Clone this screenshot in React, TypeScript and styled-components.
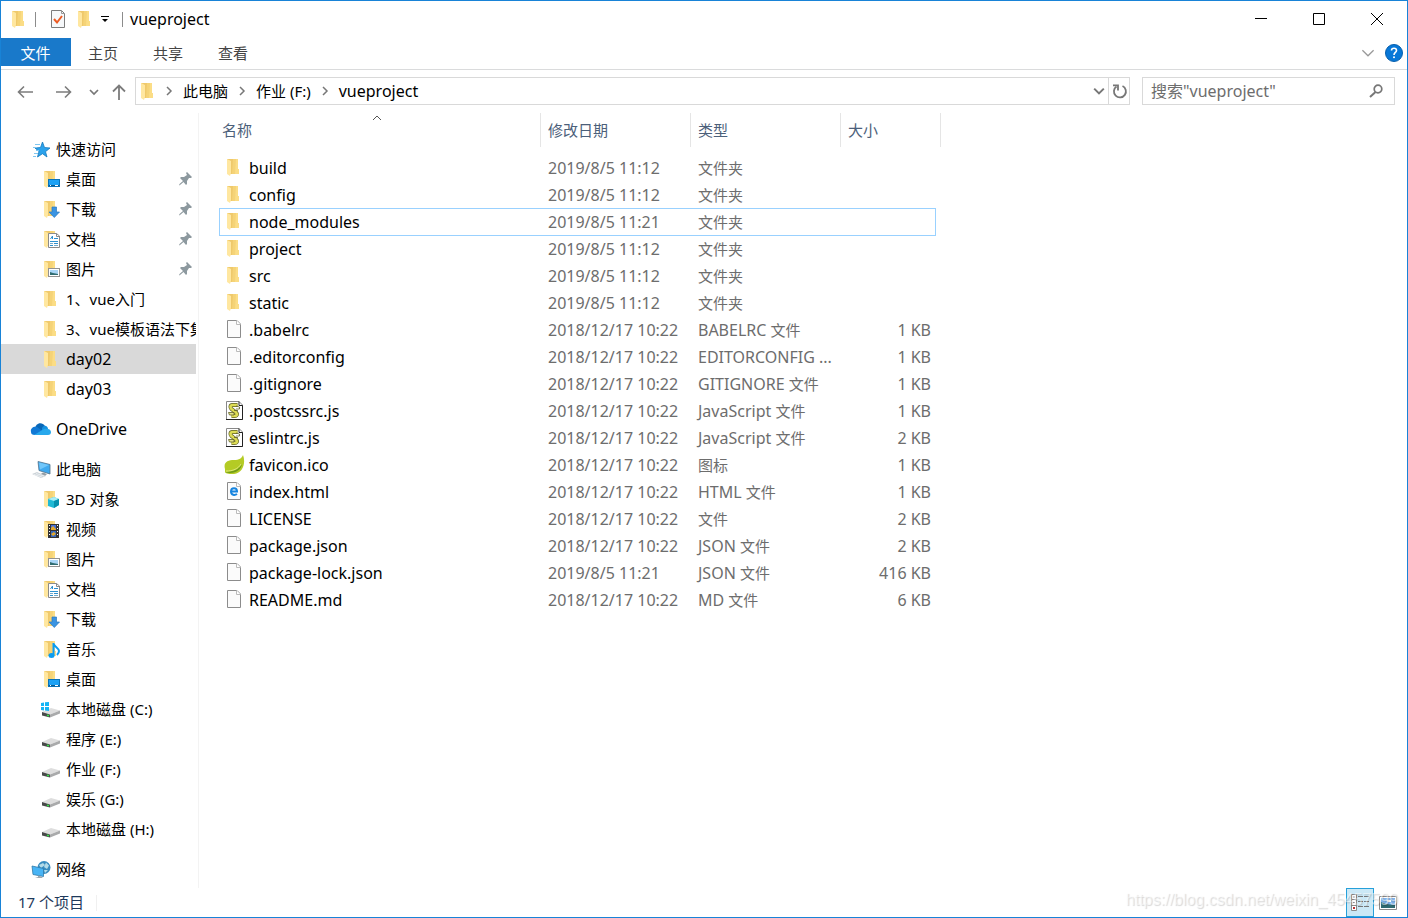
import React from "react";
import styled, { createGlobalStyle, css } from "styled-components";

const GlobalStyle = createGlobalStyle`
  * { box-sizing: border-box; }
  body { margin: 0; background: #fff; }
  button, input { font: inherit; color: inherit; }
  svg { display: block; flex: none; }
`;

const Window = styled.div`
  position: relative;
  display: flex;
  flex-direction: column;
  min-height: 100vh;
  border: 1px solid #1883d7;
  background: #fff;
  color: #000;
  font-family: "Noto Sans", "Noto Sans CJK SC", sans-serif;
  font-size: 15px;
  line-height: 20px;
`;

const TitleBar = styled.header`
  display: flex;
  align-items: center;
  height: 37px;
  padding: 0 1px 1px 10px;
`;

const Divider = styled.span<{ $before: number; $after: number }>`
  width: 1px;
  height: 15px;
  margin: 0 ${(p) => p.$after}px 0 ${(p) => p.$before}px;
  background: #8c8c8c;
`;

const PlainButton = styled.button`
  display: flex;
  align-items: center;
  justify-content: center;
  padding: 0;
  border: 0;
  background: transparent;
`;

const QuickTools = styled.div`
  display: flex;
  align-items: center;
  gap: 11px;
`;

const Title = styled.h1`
  flex: 1;
  margin: 0;
  font-size: 16px;
  font-weight: 400;
`;

const CaptionButton = styled(PlainButton)`
  width: 58px;
  height: 36px;
`;

const Ribbon = styled.nav`
  display: flex;
  align-items: flex-start;
  height: 32px;
  border-bottom: 1px solid #dadbdc;
`;

const Tab = styled.button<{ $primary?: boolean }>`
  width: ${(p) => (p.$primary ? 70 : 65)}px;
  height: 28px;
  padding: 1px 1px 0 0;
  border: 0;
  background: ${(p) => (p.$primary ? "#1979ca" : "transparent")};
  color: ${(p) => (p.$primary ? "#fff" : "#444")};
`;

const RibbonTools = styled.div`
  display: flex;
  align-items: center;
  gap: 10px;
  height: 30px;
  margin-left: auto;
  padding-right: 4px;
`;

const NavBar = styled.div`
  display: flex;
  align-items: center;
  padding: 7px 12px 8px 16px;
`;

const Arrows = styled.div`
  display: flex;
  align-items: center;
  width: 118px;
  padding-top: 2px;
`;

const ArrowButton = styled(PlainButton)<{ $gap?: number }>`
  margin-right: ${(p) => p.$gap ?? 0}px;
`;

const AddressBar = styled.div`
  display: flex;
  flex: 1;
  align-items: center;
  height: 28px;
  padding: 0 0 1px 4px;
  border: 1px solid #d9d9d9;
`;

const Crumbs = styled.div`
  display: flex;
  flex: 1;
  align-items: center;
  gap: 9px;
  padding-left: 11px;
`;

const Crumb = styled.a<{ $latin?: boolean }>`
  color: #000;
  font-size: ${(p) => (p.$latin ? 16 : 15)}px;
  text-decoration: none;
`;

const RefreshButton = styled(PlainButton)`
  width: 21px;
  height: 26px;
  padding-left: 2px;
  border-left: 1px solid #d9d9d9;
`;

const SearchBox = styled.label`
  display: flex;
  align-items: center;
  width: 253px;
  height: 28px;
  margin-left: 12px;
  padding: 0 11px 0 8px;
  border: 1px solid #d9d9d9;
`;

const SearchInput = styled.input`
  flex: 1;
  min-width: 0;
  padding: 0;
  border: 0;
  outline: 0;
  background: transparent;
  font-size: 16px;
  &::placeholder { color: #6d6d6d; opacity: 1; }
`;

const Body = styled.div`
  display: flex;
  flex: 1;
`;

const Sidebar = styled.aside`
  width: 198px;
  padding: 21px 2px 4px 0;
  border-right: 1px solid #f3f3f3;
`;

const Group = styled.ul`
  margin: 0 0 10px;
  padding: 0;
  list-style: none;
  &:last-child { margin-bottom: 0; }
`;

const TreeItem = styled.a<{ $root?: boolean; $selected?: boolean; $latin?: boolean }>`
  display: flex;
  align-items: center;
  height: 30px;
  padding: 0 4px 0 ${(p) => (p.$root ? 29 : 39)}px;
  background: ${(p) => (p.$selected ? "#d9d9d9" : "transparent")};
  color: #000;
  font-size: ${(p) => (p.$latin ? 16 : 15)}px;
  text-decoration: none;
  overflow: hidden;
`;

const TreeIcon = styled.span`
  display: flex;
  flex: none;
  width: 26px;
  padding-top: 1px;
`;

const TreeLabel = styled.span`
  flex: 1;
  margin-right: -4px;
  white-space: nowrap;
  overflow: hidden;
`;

const Content = styled.main`
  flex: 1;
  padding: 0 0 0 20px;
`;

const FileTable = styled.table`
  display: block;
  width: 722px;
`;

const Head = styled.thead`
  display: block;
  padding-bottom: 7px;
`;

const Rows = styled.tbody`
  display: block;
`;

const columns = css`
  display: grid;
  grid-template-columns: 322px 150px 150px 1fr;
`;

const HeadRow = styled.tr`
  ${columns}
`;

const HeadCell = styled.th<{ $first?: boolean }>`
  position: relative;
  height: 34px;
  padding: 7px 0 0 ${(p) => (p.$first ? 3 : 7)}px;
  border-right: 1px solid #e5e5e5;
  color: #4c607a;
  font-weight: 400;
  text-align: left;
`;

const SortMark = styled.span`
  position: absolute;
  top: 0;
  left: 153px;
`;

const FileRow = styled.tr<{ $focused?: boolean }>`
  ${columns}
  width: 717px;
  height: 27px;
  box-shadow: ${(p) =>
    p.$focused
      ? "inset 1px 0 0 #99d1ff, inset -1px 0 0 #99d1ff, inset 0 1px 0 #99d1ff, 0 1px 0 #99d1ff"
      : "none"};
`;

const FileCell = styled.td<{ $right?: boolean }>`
  padding: 4px ${(p) => (p.$right ? 5 : 0)}px 0 7px;
  color: #6d6d6d;
  font-size: 16px;
  text-align: ${(p) => (p.$right ? "right" : "left")};
  white-space: nowrap;
`;

const Han = styled.span`
  font-size: 15px;
`;

const NameCell = styled(FileCell)`
  display: flex;
  align-items: center;
  padding: 1px 0 0 5px;
  color: #000;
`;

const FileIcon = styled.span`
  display: flex;
  width: 25px;
`;

const StatusBar = styled.footer`
  display: flex;
  align-items: center;
  justify-content: space-between;
  height: 29px;
  padding-left: 17px;
  color: #1e395b;
`;

const Count = styled.span`
  padding: 0 12px 2px 0;
  border-right: 1px solid #f0f0f0;
  line-height: 14px;
`;

const ViewButtons = styled.div`
  display: flex;
  padding-right: 5px;
`;

const ViewButton = styled(PlainButton)<{ $active?: boolean }>`
  width: 28px;
  height: 29px;
  border: 1px solid ${(p) => (p.$active ? "#26a0da" : "transparent")};
  background: ${(p) => (p.$active ? "#cbe8f6" : "transparent")};
`;

const Watermark = styled.div`
  position: absolute;
  right: 9px;
  bottom: 7px;
  color: rgba(255, 255, 255, 0.5);
  font-family: "Liberation Sans", Arial, sans-serif;
  font-size: 16px;
  text-shadow: 1px 1px 1px rgba(0, 0, 0, 0.16);
  pointer-events: none;
`;

const FolderShape = () => (
  <>
    <path d="M1 1H12V11H13V16H4Z" fill="#efc96b" />
    <path d="M7 1H12V11H13V16H6Z" fill="#f5d377" />
    <path d="M10 1H12V11H13V16H9Z" fill="#fbdd86" />
    <path d="M1 1L5 3V15L4 18L1 16Z" fill="#ffe7a0" />
  </>
);

const Folder = () => (
  <svg width="13" height="18" viewBox="0 0 13 18"><FolderShape /></svg>
);

type Kind =
  | "star" | "desktop" | "download" | "document" | "picture" | "folder" | "cloud"
  | "pc" | "cube" | "video" | "music" | "system" | "drive" | "network";

const overlays: Partial<Record<Kind, React.ReactNode>> = {
  desktop: (
    <>
      <rect x="8.500" y="9.500" width="11" height="7" fill="#1ba1f5" stroke="#0b73b8" />
      <path d="M9 15.500H19" stroke="#075b91" />
      <path d="M10 15.500H11M15 15.500H18" stroke="#fff" />
    </>
  ),
  download: <path d="M12 7H16.500V12H19.500L14.300 17.500L9 12H12Z" fill="#3b94e2" stroke="#2879c0" strokeWidth=".7" />,
  document: (
    <>
      <path d="M8.500 3.500H16.500L19.500 6V17.500H8.500Z" fill="#fff" stroke="#8a8a8a" />
      <path d="M16.500 3.500V6.500H19.500" fill="none" stroke="#8a8a8a" />
      <path d="M10.500 9L12.500 6V9M14 8.500H18M10 11.500H18M14 13.500H18M10 15.500H13" stroke="#2c90cf" fill="none" />
      <path d="M10 13.500H13M14 15.500H18" stroke="#79aac8" />
    </>
  ),
  picture: (
    <>
      <rect x="8.500" y="8.500" width="11" height="8" fill="#fff" stroke="#929292" />
      <path d="M10 10H18V15H10Z" fill="#a9d5f6" />
      <path d="M10 12L13 13L18 14V15H10Z" fill="#316d72" />
    </>
  ),
  cube: (
    <>
      <path d="M8 9L14 7L19 9V15L14 18L8 16Z" fill="#20b9d4" />
      <path d="M8 9L14 7L19 9L14 11Z" fill="#a9edf5" />
      <path d="M14 11L19 9V15L14 18Z" fill="#0791ae" />
    </>
  ),
  video: (
    <>
      <path d="M8 4H19V18H8Z" fill="#333" />
      <path d="M11 5H16V10H11Z" fill="#4971d4" />
      <path d="M11 11H16V17H11Z" fill="#3768bd" />
      <path d="M11 8L13 6L16 9V10H11ZM11 14L14 12L16 14L13 16Z" fill="#e4a82b" />
      <path d="M9.500 5V17M17.500 5V17" stroke="#fff" strokeDasharray="1 2" />
    </>
  ),
  music: (
    <>
      <ellipse cx="11.500" cy="15.500" rx="3" ry="2.500" fill="#0a9cf1" />
      <path d="M13.500 15.500V3C14 7 19 8 19 11C19 13 18 14 17 15" fill="none" stroke="#0a9cf1" strokeWidth="2" />
    </>
  ),
};

const DriveShape = () => (
  <>
    <path d="M2 12L11 8L20 10.500L10 14.500Z" fill="#dedede" />
    <path d="M10 14.500L20 10.500V13.500L10 17.500Z" fill="#a9aaab" />
    <path d="M2 12L10 14.500V17.500L2 15.500Z" fill="#48494a" />
    <path d="M7 15.200L9 15.800" stroke="#38df4a" strokeWidth="1.500" />
  </>
);

const TreeGlyph = ({ kind }: { kind: Kind }) => {
  const box = { width: 21, height: 20, viewBox: "0 0 21 20" };
  switch (kind) {
    case "star":
      return (
        <svg {...box}>
          <path d="M12.500 2L14.500 7.500L20 8L15.500 11.700L17 17L12.500 13.700L7.500 17L9 11.500L5 8L10.500 7.500Z" fill="#2ba2ec" stroke="#1478bd" strokeWidth=".8" />
          <path d="M5 4.500H10M3 7.500H7M6 10.500H9M4 13.500H8M3 16.500H6" stroke="#80c6ef" />
        </svg>
      );
    case "cloud":
      return (
        <svg {...box}>
          <path d="M5 9C5 3 12 1 15 6L11 12Z" fill="#0867b7" />
          <path d="M1 12C0 8 4 6 7 7L14 12L5 15C2 15 1 14 1 12Z" fill="#1179d5" />
          <path d="M12 8C14 4 18 6 18 9L12 12Z" fill="#1490df" />
          <path d="M4 15L14 9C17 8 21 9 21 12C21 14 20 15 18 15Z" fill="#28a8ec" />
        </svg>
      );
    case "pc":
      return (
        <svg {...box}>
          <path d="M8 1.500L20 4.500V14L9 10.500Z" fill="#3fa9ef" stroke="#50718b" strokeWidth=".8" />
          <path d="M9 2.500L19 5L10 9.500Z" fill="#70c6fa" />
          <path d="M13 12.500L17 14L15 16L10 14.500Z" fill="#929da5" />
          <path d="M2 14L7 12L16 16L11 18Z" fill="#ccd3d8" />
          <path d="M4 14.500L12 17M6 13.500L14 16" stroke="#f7f9fa" strokeWidth=".7" />
        </svg>
      );
    case "network":
      return (
        <svg {...box}>
          <circle cx="14" cy="7.500" r="6.500" fill="#388cc0" />
          <path d="M9 5L13 3L15 5L11 8ZM16 2.500L19 5.500L17 9L14 7ZM14 10L18 10L15 13Z" fill="#b3dbe8" />
          <path d="M2 6L13.500 8.500V16.500L3 14.500Z" fill="#48b4f5" stroke="#307baa" strokeWidth=".8" />
          <path d="M8 15.500V17L5 18H13L11 16.500" fill="#9ca8b0" />
        </svg>
      );
    case "drive":
      return <svg {...box}><DriveShape /></svg>;
    case "system":
      return (
        <svg {...box}>
          <DriveShape />
          <path d="M1 3L4 2.500V6H1ZM5 2.300L9 2V6H5ZM1 7H4V10.500L1 10ZM5 7H9V11L5 10.500Z" fill="#14b4f5" />
        </svg>
      );
    default:
      return (
        <svg {...box}>
          <g transform="translate(3 0)"><FolderShape /></g>
          {overlays[kind]}
        </svg>
      );
  }
};

const Pin = () => (
  <svg width="13" height="14" viewBox="0 0 13 14">
    <path d="M8 0L13 5L12 6H10L8 9V12L7 13L4.500 10L1 13L0 13.500L.500 12L4 9L1 6L2 5H5L8 3L7 1Z" fill="#8d999f" />
  </svg>
);

const PageOutline = () => (
  <>
    <path d="M1.500 .500H11L14.500 4V17.500H1.500Z" fill="#fbfbfb" stroke="#8c8c8c" />
    <path d="M10.500 .500V4.500H14.500" fill="#fff" stroke="#bbb" />
  </>
);

type FileKind = "folder" | "file" | "js" | "leaf" | "html";

const FileGlyph = ({ kind }: { kind: FileKind }) => {
  const box = { width: 21, height: 20, viewBox: "0 0 21 20" };
  if (kind === "folder")
    return <svg {...box}><g transform="translate(2 0)"><FolderShape /></g></svg>;
  if (kind === "leaf")
    return (
      <svg {...box}>
        <path d="M1 14C-1 7 4 5 10 5C15 5 18 3 19 0C22 8 19 18 10 19C6 19 2 19 1 17Z" fill="#b4cb25" />
        <path d="M1 17C8 17 15 15 18 9C17 16 9 20 1 17Z" fill="#6f9b18" />
        <path d="M2 16C9 16 14 14 17 9" fill="none" stroke="#dce77c" />
      </svg>
    );
  if (kind === "js")
    return (
      <svg {...box}>
        <path d="M2.500 .500H15L18.500 4V18.500H2.500Z" fill="#fff" stroke="#888" />
        <path d="M15 .500V4.500H18.500V18.500H2" fill="none" stroke="#222" />
        <path d="M13.500 4H8.500C6 4 6 6.500 7.500 8L12 11.500C14 13.500 12.500 15 10.500 15H7.500" fill="none" stroke="#5f6024" strokeWidth="4" />
        <path d="M13.500 4H8.500C6 4 6 6.500 7.500 8L12 11.500C14 13.500 12.500 15 10.500 15H7.500" fill="none" stroke="#dddc55" strokeWidth="2.600" />
        <path d="M4.500 11.500H10V14H5.500Z" fill="#e6e68b" stroke="#5f6024" strokeWidth=".8" />
        <path d="M12 5L15.500 6V8H12M10 9.500H14" fill="none" stroke="#5f6024" strokeWidth=".8" />
      </svg>
    );
  return (
    <svg {...box}>
      <g transform="translate(2 0)">
        <PageOutline />
        {kind === "html" && (
          <path d="M5 9.500H11C11 5 5 5 5 9.500C5 13.500 9 13.500 11 12" fill="none" stroke="#1684df" strokeWidth="2" />
        )}
      </g>
    </svg>
  );
};

const Chevron = ({ dir, size = 10, color = "#777", weight = 1.5 }: {
  dir: "right" | "down" | "up"; size?: number; color?: string; weight?: number;
}) => {
  const d = { right: "M3 1L7 5L3 9", down: "M1 3L5 7L9 3", up: "M1 7L5 3L9 7" }[dir];
  return (
    <svg width={size} height={size} viewBox="0 0 10 10">
      <path d={d} fill="none" stroke={color} strokeWidth={weight} />
    </svg>
  );
};

interface Node { kind: Kind; label: string; pinned?: boolean; selected?: boolean; root?: boolean; }

const tree: Node[][] = [
  [
    { kind: "star", label: "快速访问", root: true },
    { kind: "desktop", label: "桌面", pinned: true },
    { kind: "download", label: "下载", pinned: true },
    { kind: "document", label: "文档", pinned: true },
    { kind: "picture", label: "图片", pinned: true },
    { kind: "folder", label: "1、vue入门" },
    { kind: "folder", label: "3、vue模板语法下集" },
    { kind: "folder", label: "day02", selected: true },
    { kind: "folder", label: "day03" },
  ],
  [{ kind: "cloud", label: "OneDrive", root: true }],
  [
    { kind: "pc", label: "此电脑", root: true },
    { kind: "cube", label: "3D 对象" },
    { kind: "video", label: "视频" },
    { kind: "picture", label: "图片" },
    { kind: "document", label: "文档" },
    { kind: "download", label: "下载" },
    { kind: "music", label: "音乐" },
    { kind: "desktop", label: "桌面" },
    { kind: "system", label: "本地磁盘 (C:)" },
    { kind: "drive", label: "程序 (E:)" },
    { kind: "drive", label: "作业 (F:)" },
    { kind: "drive", label: "娱乐 (G:)" },
    { kind: "drive", label: "本地磁盘 (H:)" },
  ],
  [{ kind: "network", label: "网络", root: true }],
];

const early = "2018/12/17 10:22";
const files: [FileKind, string, string, string, string][] = [
  ["folder", "build", "2019/8/5 11:12", "文件夹", ""],
  ["folder", "config", "2019/8/5 11:12", "文件夹", ""],
  ["folder", "node_modules", "2019/8/5 11:21", "文件夹", ""],
  ["folder", "project", "2019/8/5 11:12", "文件夹", ""],
  ["folder", "src", "2019/8/5 11:12", "文件夹", ""],
  ["folder", "static", "2019/8/5 11:12", "文件夹", ""],
  ["file", ".babelrc", early, "BABELRC 文件", "1 KB"],
  ["file", ".editorconfig", early, "EDITORCONFIG ...", "1 KB"],
  ["file", ".gitignore", early, "GITIGNORE 文件", "1 KB"],
  ["js", ".postcssrc.js", early, "JavaScript 文件", "1 KB"],
  ["js", "eslintrc.js", early, "JavaScript 文件", "2 KB"],
  ["leaf", "favicon.ico", early, "图标", "1 KB"],
  ["html", "index.html", early, "HTML 文件", "1 KB"],
  ["file", "LICENSE", early, "文件", "2 KB"],
  ["file", "package.json", early, "JSON 文件", "2 KB"],
  ["file", "package-lock.json", "2019/8/5 11:21", "JSON 文件", "416 KB"],
  ["file", "README.md", early, "MD 文件", "6 KB"],
];

const isLatin = (text: string) => /^[\x00-\x7f]*$/.test(text);

/* Chinese runs are set one step smaller than the Latin letters beside them. */
const MixedText = ({ text }: { text: string }) => (
  <>
    {text.split(/([\u4e00-\u9fff]+)/).filter(Boolean).map((run, i) =>
      /[\u4e00-\u9fff]/.test(run) ? <Han key={i}>{run}</Han> : run
    )}
  </>
);

export default function App() {
  return (
    <Window>
      <GlobalStyle />
      <TitleBar>
        <Folder />
        <Divider $before={11} $after={14} />
        <QuickTools>
          <PlainButton aria-label="属性">
            <svg width="16" height="18" viewBox="0 0 16 18">
              <path d="M1.500 .500H11.500L14.500 3.500V17.500H1.500Z" fill="#f6f8fa" stroke="#7c7c7c" />
              <path d="M11.500 .500V3.500H14.500" fill="none" stroke="#999" />
              <path d="M4 9L7 12.500L12 6" fill="none" stroke="#ec5b24" strokeWidth="2" />
            </svg>
          </PlainButton>
          <PlainButton aria-label="新建文件夹"><Folder /></PlainButton>
          <PlainButton aria-label="自定义快速访问工具栏">
            <svg width="8" height="8" viewBox="0 0 8 8">
              <path d="M0 1.500H8" stroke="#000" /><path d="M1 4H7L4 7Z" fill="#000" />
            </svg>
          </PlainButton>
        </QuickTools>
        <Divider $before={13} $after={7} />
        <Title>vueproject</Title>
        <CaptionButton aria-label="最小化">
          <svg width="12" height="12"><path d="M0 5.500H12" stroke="#000" /></svg>
        </CaptionButton>
        <CaptionButton aria-label="最大化">
          <svg width="12" height="12"><path d="M.500 .500H11.500V11.500H.500Z" fill="none" stroke="#000" /></svg>
        </CaptionButton>
        <CaptionButton aria-label="关闭">
          <svg width="12" height="12"><path d="M0 0L12 12M12 0L0 12" stroke="#000" /></svg>
        </CaptionButton>
      </TitleBar>

      <Ribbon>
        <Tab $primary>文件</Tab>
        <Tab>主页</Tab>
        <Tab>共享</Tab>
        <Tab>查看</Tab>
        <RibbonTools>
          <PlainButton aria-label="展开功能区"><Chevron dir="down" size={14} color="#999" weight={0.9} /></PlainButton>
          <PlainButton aria-label="帮助">
            <svg width="18" height="18" viewBox="0 0 18 18">
              <circle cx="9" cy="9" r="8.500" fill="#0877d7" stroke="#075fac" />
              <path d="M6.500 6.500C6.500 3.500 11.500 3.500 11.500 6.500C11.500 8.500 9 8.500 9 11" fill="none" stroke="#fff" strokeWidth="1.600" />
              <circle cx="9" cy="13.300" r="1" fill="#fff" />
            </svg>
          </PlainButton>
        </RibbonTools>
      </Ribbon>

      <NavBar>
        <Arrows>
          <ArrowButton $gap={23} aria-label="后退">
            <svg width="16" height="14"><path d="M16 7H1M7 1.500L1.500 7L7 12.500" fill="none" stroke="#7c7c7c" strokeWidth="1.600" /></svg>
          </ArrowButton>
          <ArrowButton $gap={17} aria-label="前进">
            <svg width="16" height="14"><path d="M0 7H15M9 1.500L14.500 7L9 12.500" fill="none" stroke="#7c7c7c" strokeWidth="1.600" /></svg>
          </ArrowButton>
          <ArrowButton $gap={13} aria-label="最近浏览的位置"><Chevron dir="down" weight={1.7} /></ArrowButton>
          <ArrowButton aria-label="上移">
            <svg width="14" height="16"><path d="M7 16V1.500M1 7.500L7 1.500L13 7.500" fill="none" stroke="#7c7c7c" strokeWidth="1.800" /></svg>
          </ArrowButton>
        </Arrows>
        <AddressBar>
          <Folder />
          <Crumbs>
            <Chevron dir="right" />
            <Crumb href="#pc">此电脑</Crumb>
            <Chevron dir="right" />
            <Crumb href="#f">作业 (F:)</Crumb>
            <Chevron dir="right" />
            <Crumb href="#vueproject" $latin>vueproject</Crumb>
          </Crumbs>
          <ArrowButton $gap={3} aria-label="以前的位置"><Chevron dir="down" size={12} weight={1.7} /></ArrowButton>
          <RefreshButton aria-label="刷新">
            <svg width="16" height="16" viewBox="0 0 16 16">
              <path d="M10.500 3A6 6 0 1 1 4.500 3.500" fill="none" stroke="#777" strokeWidth="1.800" />
              <path d="M1 2.300H6V7.500" fill="none" stroke="#777" strokeWidth="1.800" />
            </svg>
          </RefreshButton>
        </AddressBar>
        <SearchBox>
          <SearchInput type="text" aria-label="搜索" placeholder={'搜索"vueproject"'} />
          <svg width="14" height="14" viewBox="0 0 14 14">
            <circle cx="9" cy="5" r="3.800" fill="none" stroke="#777" strokeWidth="1.700" />
            <path d="M6.500 8L1 13" stroke="#777" strokeWidth="2" />
          </svg>
        </SearchBox>
      </NavBar>

      <Body>
        <Sidebar>
          {tree.map((group, i) => (
            <Group key={i}>
              {group.map((n) => (
                <li key={n.label}>
                  <TreeItem href="#" $root={n.root} $selected={n.selected} $latin={isLatin(n.label)}>
                    <TreeIcon><TreeGlyph kind={n.kind} /></TreeIcon>
                    <TreeLabel>{n.label}</TreeLabel>
                    {n.pinned && <Pin />}
                  </TreeItem>
                </li>
              ))}
            </Group>
          ))}
        </Sidebar>
        <Content>
          <FileTable>
            <Head>
              <HeadRow>
                <HeadCell $first>
                  名称
                  <SortMark><Chevron dir="up" color="#555" weight={1} /></SortMark>
                </HeadCell>
                <HeadCell>修改日期</HeadCell>
                <HeadCell>类型</HeadCell>
                <HeadCell>大小</HeadCell>
              </HeadRow>
            </Head>
            <Rows>
              {files.map(([kind, name, date, type, size]) => (
                <FileRow key={name} $focused={name === "node_modules"}>
                  <NameCell>
                    <FileIcon><FileGlyph kind={kind} /></FileIcon>
                    {name}
                  </NameCell>
                  <FileCell>{date}</FileCell>
                  <FileCell><MixedText text={type} /></FileCell>
                  <FileCell $right>{size}</FileCell>
                </FileRow>
              ))}
            </Rows>
          </FileTable>
        </Content>
      </Body>

      <StatusBar>
        <Count>17 个项目</Count>
        <ViewButtons>
          <ViewButton $active aria-label="详细信息">
            <svg width="18" height="17" viewBox="0 0 18 17">
              <path d="M.500 .500H5.500V16.500H.500ZM.500 5.500H5.500M.500 11.500H5.500" fill="#fff" stroke="#8a8a8a" />
              <path d="M2 3H4M2 8.500H4" stroke="#999" /><path d="M2 13H4V15H2Z" fill="#b33" />
              <path d="M7 2.500H18M7 7.500H18M7 12.500H18" stroke="#777" strokeDasharray="5 1" />
            </svg>
          </ViewButton>
          <ViewButton aria-label="大缩略图">
            <svg width="18" height="14" viewBox="0 0 18 14">
              <path d="M.500 .500H17.500V13.500H.500Z" fill="#fff" stroke="#8a8a8a" />
              <path d="M2 2H16V12H2Z" fill="#7fb4ec" />
              <path d="M2 6L7 8L16 9V12H2Z" fill="#2f6a70" /><path d="M7 4H12V6H9Z" fill="#fff" />
            </svg>
          </ViewButton>
        </ViewButtons>
      </StatusBar>
      <Watermark>https://blog.csdn.net/weixin_45457599</Watermark>
    </Window>
  );
}
